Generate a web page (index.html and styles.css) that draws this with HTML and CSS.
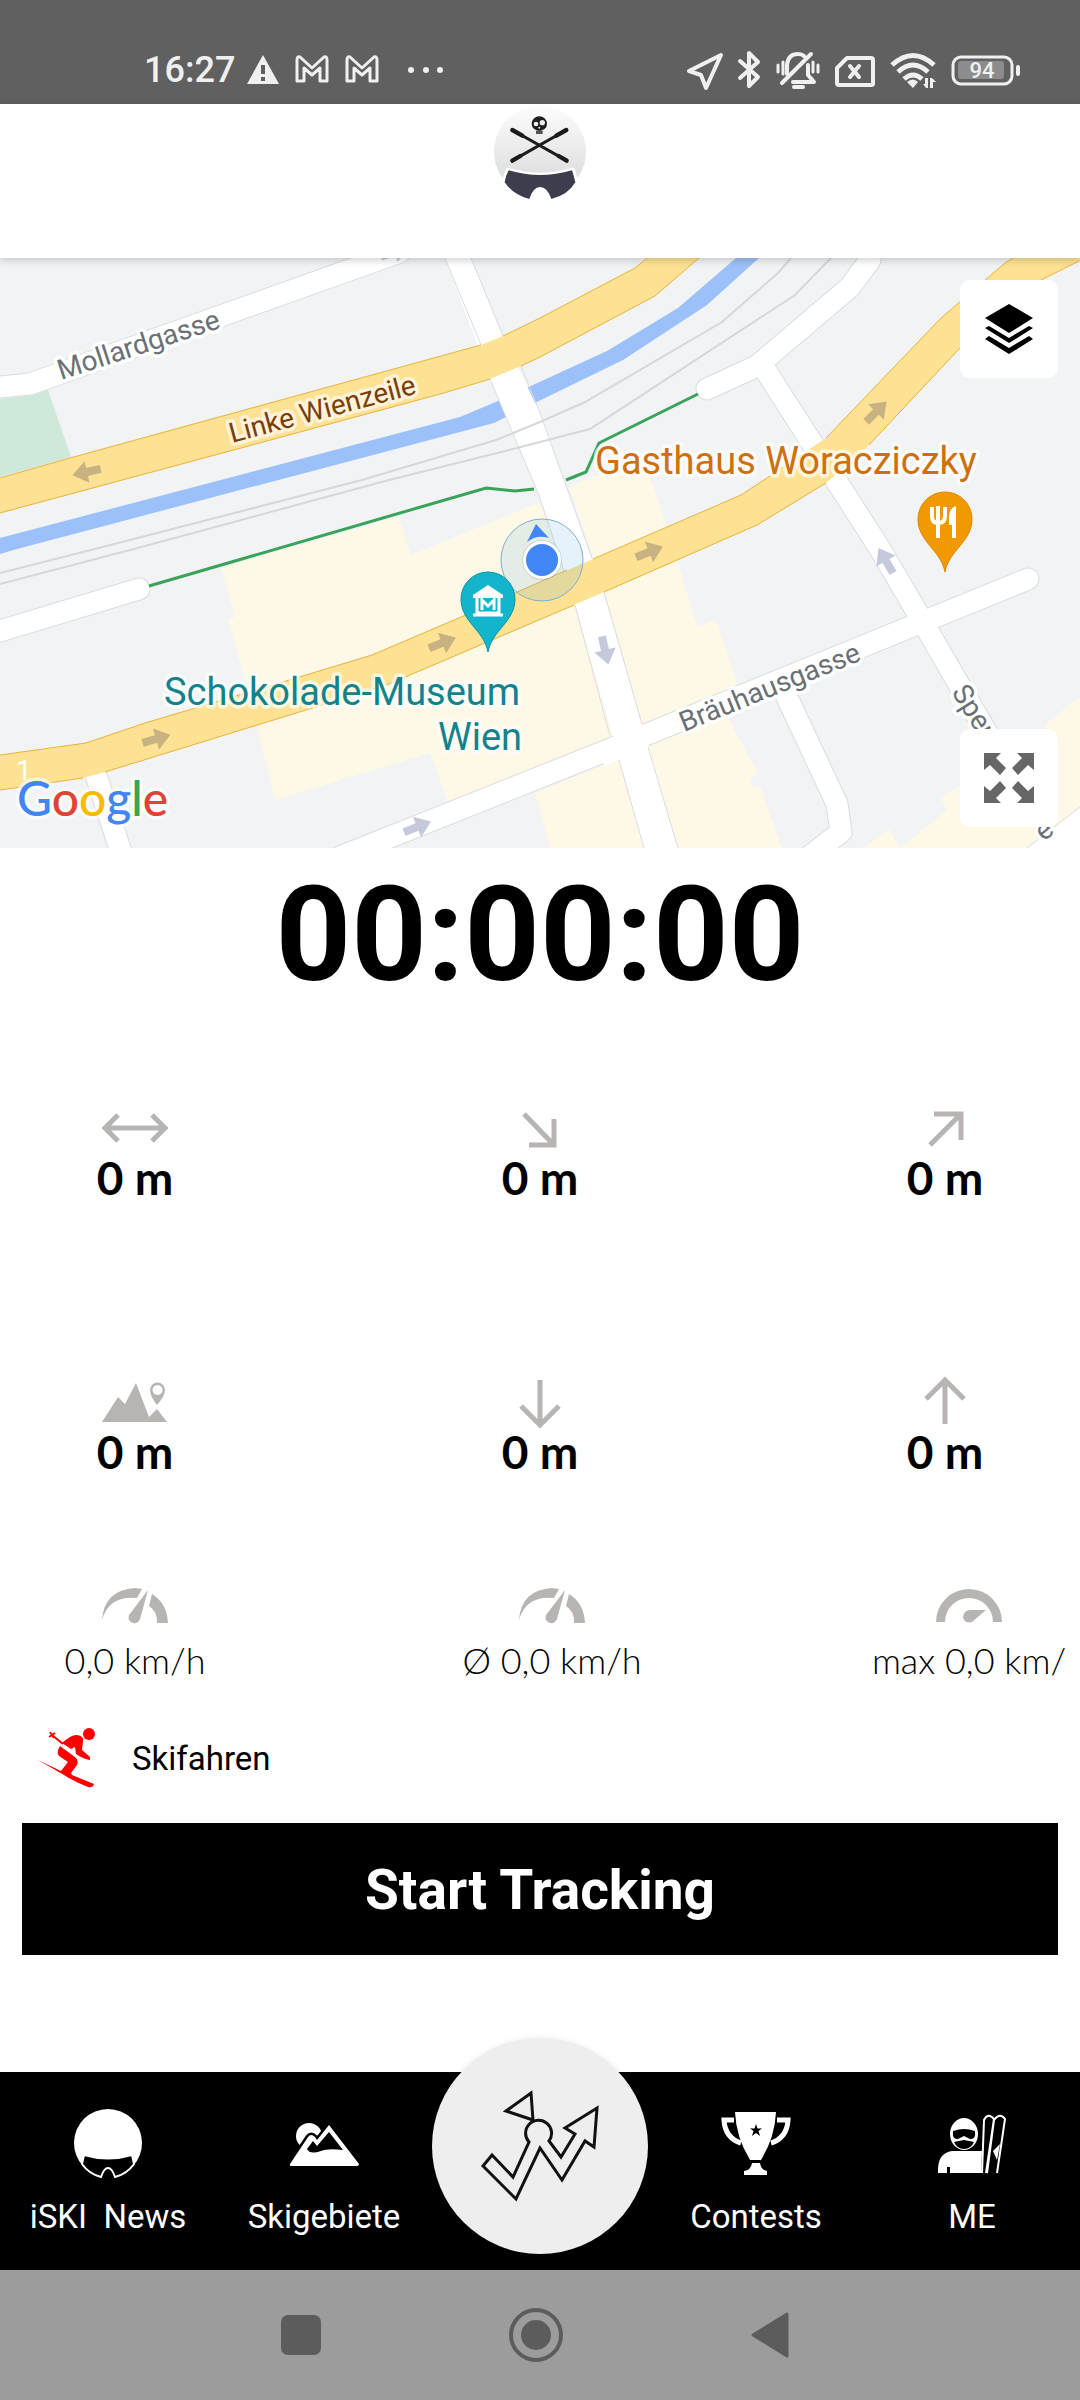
FILE: index.html
```html
<!DOCTYPE html>
<html lang="de">
<head>
  <meta charset="UTF-8">
  <meta name="viewport" content="width=device-width, initial-scale=1">
  <title>iSKI Tracker</title>
  <link rel="stylesheet" href="styles.css">
</head>
<body>

<div class="status-bar">
  <div class="status-group left">
    <span class="clock">16:27</span>
    <svg width="32" height="40" viewBox="0 0 32 40"><path d="M16 5 32 34H0Z" fill="#f0f0f0"/><path d="M14 15h4v9h-4zM14 27h4v4h-4z" fill="#606060"/></svg>
    <svg width="34" height="40" viewBox="0 0 34 40" class="line"><path d="M2 31V10q0-4 3-3L17 18 29 7q3-1 3 3v21h-7V18l-8 7-8-7v13Z"/></svg>
    <svg width="34" height="40" viewBox="0 0 34 40" class="line"><path d="M2 31V10q0-4 3-3L17 18 29 7q3-1 3 3v21h-7V18l-8 7-8-7v13Z"/></svg>
    <svg width="48" height="40" viewBox="0 0 48 40" fill="#f0f0f0"><circle cx="16" cy="20" r="3"/><circle cx="31" cy="20" r="3"/><circle cx="45" cy="20" r="3"/></svg>
  </div>
  <div class="status-group right">
    <svg width="36" height="40" viewBox="0 0 36 40" class="line thick"><path d="M34 5 2 21l12 4 5 13Z"/></svg>
    <svg width="23" height="40" viewBox="0 0 23 40" class="line thick"><path d="M2 11 20 27 11 36V3l9 9L2 28"/></svg>
    <svg width="44" height="40" viewBox="0 0 44 40" class="line thick"><path d="M6 33 35 4M11 24V15Q12 4 22 4q4 0 6 2M32 15v10l6 7H17"/><path d="M2 15v7M7 12v12M37 12v10M42 15v7" stroke-width="3"/><path d="M18 37h9" stroke-width="4"/></svg>
    <svg width="40" height="40" viewBox="0 0 40 40" class="line thick"><path d="M12 8h24q2 0 2 2v24q0 1-2 1H4q-2 0-2-2V18Z"/><path d="m15 16 9 11M24 16l-9 11"/></svg>
    <svg width="46" height="40" viewBox="0 0 46 40"><g fill="none" stroke="#f0f0f0" stroke-width="5"><path d="M2 15Q23-4 44 15"/><path d="M8 22q15-14 30 0"/><path d="M14 29q9-8 18 0"/></g><path d="m17 32q6-5 11 0l-5 6ZM35 28h3v10h-2l-3-4h2zM40 38V28h2l4 4h-3v6z" fill="#f0f0f0"/></svg>
    <svg width="69" height="40" viewBox="0 0 69 40"><rect x="2" y="7" width="59" height="27" rx="8" fill="none" stroke="#f0f0f0" stroke-width="3"/><rect x="7" y="11" width="46" height="18" rx="3" fill="#8c8c8c"/><rect x="65" y="15" width="4" height="11" rx="2" fill="#f0f0f0"/><text x="31" y="28" text-anchor="middle" class="battery-text">94</text></svg>
  </div>
</div>

<header>
  <svg width="100" height="100" viewBox="30 12 300 300">
    <defs>
      <linearGradient id="helmet" x1="0" y1="0" x2="0" y2="1">
        <stop offset="0" stop-color="#fdfdfd"/>
        <stop offset="1" stop-color="#dedede"/>
      </linearGradient>
    </defs>
    <path d="M68 235A138 138 0 1 1 292 235L284 204Q180 236 78 204Z" fill="url(#helmet)"/>
    <g stroke="#1c1c1c" stroke-linecap="round"><path d="M97 90 260 182M259 90 97 182" stroke-width="9"/><path d="m97 90 30 17M259 90l-30 17M97 182l24-14M260 182l-24-14" stroke-width="13"/></g>
    <ellipse cx="178" cy="71" rx="23" ry="22" fill="#1c1c1c"/>
    <path d="M168 92h20v10h-20z" fill="#555"/>
    <circle cx="187" cy="68" r="8" fill="#eee"/><circle cx="168" cy="72" r="7" fill="#eee"/><circle cx="178" cy="83" r="3" fill="#eee"/>
    <path d="M86 211Q180 239 276 211q6 18 10 36-22 38-72 50-12-36-34-36-20 0-32 36-48-12-74-50 2-18 12-36Z" fill="#3c3e4e" stroke="#fff" stroke-width="14" paint-order="stroke"/>
  </svg>
</header>

<section class="map">
  <svg class="map-canvas" viewBox="0 0 1080 590">
    <defs>
      <path id="arrow" d="M-14-4H0v-7L15 0 0 11V4h-14Z"/>
      <path id="pin" d="M0 52C-4 30-27 22-27-1a27 27 0 0 1 54 0C27 22 4 30 0 52Z"/>
      <g id="streets">
        <path d="M-10 130 30 126 400-6"/>
        <path d="M-10 376 139 331"/>
        <path d="M92 505 123 600"/>
        <path d="M340 599 628 484 1028 321"/>
        <path d="M762 107 880 291 924 366 1010 515"/>
        <path d="M707 131 757 108 850 29 870 2"/>
        <path d="M785 435 837 546 841 574 805 602"/>
      </g>
    </defs>
    <rect width="1080" height="590" fill="#f1f3f5"/>

    <!-- blocks -->
    <path d="M0 141 33 137 48 132 71 199 0 219Z" fill="#cee9d9"/>
    <g fill="#fef8e7">
      <path d="M221 310 272 295 399 259 411 297 540 244 575 347 613 479 448 544 430 495 275 542 253 452 228 361 235 359Z"/>
      <path d="M569 228 605 214 645 203 666 267 678 305 697 368 716 362 737 425 729 462 758 515 749 522 752 529 760 528 782 590H678L604 334Z"/>
      <path d="M535 535 619 500 644 590H550Z"/>
      <path d="M864 590 889 571 900 590 947 552 940 539 960 528 1058 480 1044 467 1080 439V590Z"/>
    </g>
    <path d="M0 280 460 159 498 143 607 93 678 50 736 0H759L707 47 623 102 504 160 494 165 17 291 0 296Z" fill="#9cc0f9"/>

    <!-- streets -->
    <g fill="none" stroke-linecap="round" stroke-linejoin="round">
      <use href="#streets" stroke="#dadce0" stroke-width="23"/>
      <use href="#streets" stroke="#fff" stroke-width="21"/>
    </g>
    <path d="M445 0 490 121 540 240 575 347 613 479 644 590H678L604 334 540 155 503 78 471 0Z" fill="#fff"/>
    <path d="M1027 590 1080 549V590Z" fill="#fff"/>
    <g fill="none" stroke="#dadce0" stroke-width="1">
      <path d="M445 0 481 87M471 0 503 78M490 121 540 240 572 338M521 108 540 155 592 300M575 347 610 478M604 334 642 466M619 502 644 590M648 489 678 590M1027 590 1080 549"/>
    </g>
    <path d="M600 500 628 484 660 471" stroke="#fff" stroke-width="20"/>
    <g fill="none" stroke="#d5d7dc" stroke-width="2">
      <path d="M0 315 91 292 362 222 496 182 540 164 585 144 722 64 778 15 791 0"/>
      <path d="M0 326 134 291 389 222 517 190 590 171 795 37 831 0"/>
    </g>
    <g fill="none" stroke="#3aa35a" stroke-width="3">
      <path d="M149 328 486 230 515 233 534 231M566 222 586 214 599 185 698 136"/>
    </g>

    <!-- main roads -->
    <g fill="#fde293">
      <path d="M0 220 70 200 481 87 503 78 540 60 635 10 647 0H699L655 38 540 99 521 108 490 121 444 135 241 190 0 255Z"/>
      <path d="M0 497 86 485 145 465 296 420 372 397 461 359 593 301 741 237 826 180 941 60 1005 5 1013 0H1085L1041 22 960 90 869 187 850 205 826 225 757 267 604 334 574 347 389 426 306 452 105 514 83 520 0 532Z"/>
    </g>
    <g fill="none" stroke="#e9b23c" stroke-width="1">
      <path d="M0 220 70 200 481 87M503 78 540 60 635 10 647 0M699 0 655 38 540 99 521 108M490 121 444 135 241 190 0 255"/>
      <path d="M0 497 86 485 145 465 296 420 372 397 461 359 567 312M593 301 741 237 802 197M826 180 941 60 1005 5 1013 0M1085 0 1041 22 960 90 869 187M826 225 757 267 604 334M574 347 389 426 306 452 105 514M83 520 0 532"/>
    </g>

    <g fill="#c8b282">
      <use href="#arrow" transform="translate(87 214) rotate(167)"/>
      <use href="#arrow" transform="translate(876 154) rotate(-45)"/>
      <use href="#arrow" transform="translate(649 294) rotate(-22)"/>
      <use href="#arrow" transform="translate(156 481) rotate(-16)"/>
      <use href="#arrow" transform="translate(442 385) rotate(-22)"/>
    </g>
    <g fill="#c6c8dc">
      <use href="#arrow" transform="translate(417 569) rotate(-22)"/>
      <use href="#arrow" transform="translate(605 392) rotate(77)"/>
      <use href="#arrow" transform="translate(886 303) rotate(240)"/>
      <use href="#arrow" transform="translate(394 -6) rotate(-20)"/>
    </g>

    <!-- position -->
    <circle cx="542" cy="302" r="41" fill="#4aa3e0" fill-opacity="0.14" stroke="#7fb0cf" stroke-width="1"/>
    <path d="M536 266 549 280Q537 276 527 284Z" fill="#4285f4"/>
    <circle cx="542" cy="302" r="20" fill="#000" fill-opacity="0.1"/>
    <circle cx="542" cy="302" r="19" fill="#fff"/>
    <circle cx="542" cy="302" r="16" fill="#4285f4"/>

    <!-- places -->
    <g transform="translate(488 342)">
      <use href="#pin" fill="#12b5cb" stroke="#1092a5"/>
      <path d="M0-15 15-5v3h-30v-3Z" fill="#fff"/>
      <path d="M-11-2V13H11V-2M-15 15H15" fill="none" stroke="#fff" stroke-width="3"/>
      <path d="M-6 10V0L0 6 6 0V10" fill="none" stroke="#fff" stroke-width="3"/>
    </g>
    <g transform="translate(945 262)">
      <use href="#pin" fill="#f29900" stroke="#dd8600"/>
      <path d="M-13-13V-4Q-13 3-7 3 0 3 0-4V-13M-7-14V18" fill="none" stroke="#fff" stroke-width="4"/>
      <path d="M11-14Q4-12 4-2V5H7V18H11Z" fill="#fff"/>
    </g>

    <g class="label street">
      <text transform="translate(61 122) rotate(-18)">Mollardgasse</text>
      <text transform="translate(684 474) rotate(-22)">Bräuhausgasse</text>
      <text transform="translate(951 434) rotate(58)">Sper</text>
      <text transform="translate(1044 584) rotate(-40)">e</text>
    </g>
    <text class="label avenue" transform="translate(232 185) rotate(-15)">Linke Wienzeile</text>
    <text class="label food" x="595" y="216">Gasthaus Woracziczky</text>
    <text class="label museum" x="164" y="447">Schokolade-Museum</text>
    <text class="label museum" x="438" y="492">Wien</text>
    <text class="label page" x="16" y="522">1</text>
    <text class="label google" x="17" y="558"><tspan fill="#4285f4">G</tspan><tspan fill="#e04335">o</tspan><tspan fill="#f8bb05">o</tspan><tspan fill="#4285f4">g</tspan><tspan fill="#34a853">l</tspan><tspan fill="#e04335">e</tspan></text>
  </svg>
  <button class="map-btn layers" aria-label="Layers">
    <svg width="50" height="50" viewBox="0 0 50 50"><path d="M25 0 49 14 25 29 1 14ZM5 22 25 34 45 22 49 24 25 39 1 24ZM5 32 25 44 45 32 49 35 25 50 1 35Z"/></svg>
  </button>
  <button class="map-btn expand" aria-label="Fullscreen">
    <svg width="50" height="50" viewBox="0 0 50 50" fill="#666"><path id="corner" d="M0 0H17L12 5 22 15 16 22 6 12 0 17Z"/><use href="#corner" transform="matrix(-1 0 0 1 50 0)"/><use href="#corner" transform="matrix(1 0 0 -1 0 50)"/><use href="#corner" transform="matrix(-1 0 0 -1 50 50)"/></svg>
  </button>
</section>

<main>
  <div class="timer">00:00:00</div>

  <div class="stats">
    <div class="stat">
      <svg width="66" height="48" viewBox="0 0 66 48"><path d="M16 11 3 24 16 37M50 11 63 24 50 37M3 24H63"/></svg>
      <span>0 m</span>
    </div>
    <div class="stat">
      <svg width="66" height="48" viewBox="0 0 66 48"><path d="M22 41H47V15M17 10 46 40"/></svg>
      <span>0 m</span>
    </div>
    <div class="stat">
      <svg width="66" height="48" viewBox="0 0 66 48"><path d="M22 10H49V36M18 41 48 11"/></svg>
      <span>0 m</span>
    </div>
    <div class="stat">
      <svg width="66" height="48" viewBox="0 0 66 48" class="solid"><path d="M0 44 16 19 23 26 34 5 47 39 55 31 65 44Z"/><path fill-rule="evenodd" d="M55 27Q48 18 48 12a7 7 0 0 1 15 0Q63 18 55 27ZM55.500 7a5 5 0 1 0 .1 0Z"/></svg>
      <span>0 m</span>
    </div>
    <div class="stat">
      <svg width="66" height="48" viewBox="0 0 66 48"><path d="M33 2V46M14 28 33 47 52 28"/></svg>
      <span>0 m</span>
    </div>
    <div class="stat">
      <svg width="66" height="48" viewBox="0 0 66 48"><path d="M33 46V2M14 21 33 2 52 21"/></svg>
      <span>0 m</span>
    </div>
  </div>

  <div class="speeds">
    <div class="speed">
      <svg width="66" height="36" viewBox="0 0 66 36"><path d="M0 32Q2 2 33 0L40 1 35 10Q7 7 0 32ZM46 2 38 31Q36 36 31 35 25 33 27 27ZM50 6Q65 15 66 35H55Q56 24 47 18Z"/></svg>
      <span>0,0 km/h</span>
    </div>
    <div class="speed">
      <svg width="66" height="36" viewBox="0 0 66 36"><path d="M0 32Q2 2 33 0L40 1 35 10Q7 7 0 32ZM46 2 38 31Q36 36 31 35 25 33 27 27ZM50 6Q65 15 66 35H55Q56 24 47 18Z"/></svg>
      <span>Ø 0,0 km/h</span>
    </div>
    <div class="speed">
      <svg width="66" height="36" viewBox="0 0 66 36"><path d="M0 34A33 33 0 0 1 66 34H57A24 24 0 0 0 9 34ZM50 22 36 34Q28 36 27 29 28 22 34 22Z"/></svg>
      <span>max 0,0 km/</span>
    </div>
  </div>

  <div class="activity">
    <svg width="60" height="60" viewBox="0 0 60 60" fill="#f00"><circle cx="53" cy="6" r="6"/><path d="M26 15Q36 6 41 7 48 8 47 13L46 22 54 29V32Q47 31 40 26L39 19 35 21Z"/><path d="M24 18 39 29Q43 32 41 37L35 45 36 47 58 56Q57 60 52 59 37 53 28 47L2 32 25 43 32 34 23 28Q20 24 24 18Z"/><path d="M16 7 27 16M13 9 19 5M14 4l4 6" stroke="#f00" stroke-width="2"/></svg>
    <span>Skifahren</span>
  </div>

  <button class="start-btn">Start Tracking</button>
</main>

<nav class="tabs">
  <a href="#news">
    <svg width="72" height="72" viewBox="0 0 72 72"><path d="M11 59A34 34 0 1 1 61 59Z" fill="#fff"/><path d="M12 48Q36 55 60 48L62 57Q55 67 43 70 40 61 36 61 32 61 29 70 17 67 10 57Z" fill="#000" stroke="#fff" stroke-width="2"/></svg>
    iSKI&nbsp; News
  </a>
  <a href="#resorts">
    <svg width="72" height="72" viewBox="0 0 72 72"><circle cx="21" cy="29" r="13" fill="#fff"/><path d="M2 57 20 30Q23 26 27 30L29 33 41 18 71 57Q71 59 69 59H4Q1 59 2 57Z" fill="#fff" stroke="#000" stroke-width="5" paint-order="stroke"/><path d="M19 42 25 34 29 39 41 25 55 43Q40 41 33 44 22 48 19 42Z"/></svg>
    Skigebiete
  </a>
  <a href="#track" class="fab" aria-label="Tracking">
    <svg viewBox="0 0 216 216" fill="none" stroke="#111" stroke-width="3"><path d="M51 128 60 117 81 139 97 104A13 13 0 1 1 117 103L129 119 143 96 133 90 165 70 162 109 153 103 130 142 108 110 84 161Z"/><path d="M74 73 99 55 101 82Z"/></svg>
  </a>
  <a href="#contests">
    <svg width="72" height="72" viewBox="0 0 72 72" fill="#fff"><path d="M15 5H56Q55 30 41 53H30Q16 30 15 5Z"/><path d="M32 56H40Q41 63 47 64V68H24V64Q31 63 32 56Z"/><path d="M14 13H4Q5 31 21 36M57 13H68Q67 31 51 36" fill="none" stroke="#fff" stroke-width="5"/><path d="m36 17 1.500 4.500H42L38.500 24 40 29 36 26 32 29 33.500 24 30 21.500H34.500Z" fill="#000"/></svg>
    Contests
  </a>
  <a href="#me">
    <svg width="72" height="72" viewBox="0 0 72 72"><ellipse cx="28" cy="27" rx="14" ry="16" fill="#fff"/><path d="M17 24Q28 20 39 24 40 33 34 32L28 29 22 32Q16 33 17 24ZM18 35 28 33 38 35Q35 42 28 42 21 42 18 35Z"/><path d="M2 66Q1 46 16 44H46L45 66H14V60H11V66Z" fill="#fff"/><path d="M46 66 48 13Q52 5 58 12L50 66M51 66 58 13Q64 5 69 12L61 66" fill="none" stroke="#fff" stroke-width="2"/><path d="M64 37 57 44 61 53Z" fill="#fff"/></svg>
    ME
  </a>
</nav>

<div class="system-nav">
  <button aria-label="Recent apps"><svg width="56" height="56" viewBox="0 0 56 56"><rect x="8" y="8" width="40" height="40" rx="7" fill="#5c5c5c"/></svg></button>
  <button aria-label="Home"><svg width="56" height="56" viewBox="0 0 56 56"><circle cx="28" cy="28" r="25" fill="none" stroke="#5c5c5c" stroke-width="4"/><circle cx="28" cy="28" r="15" fill="#5c5c5c"/></svg></button>
  <button aria-label="Back"><svg width="56" height="56" viewBox="0 0 56 56"><path d="M10 28 44 7V49Z" fill="#5c5c5c" stroke="#5c5c5c" stroke-width="3" stroke-linejoin="round"/></svg></button>
</div>

</body>
</html>
```
FILE: styles.css
```css
* {
  box-sizing: border-box;
}

body {
  margin: 0;
  font-family: Roboto, "Open Sans", sans-serif;
  background-color: #fff;
  color: #000;
  display: flex;
  flex-direction: column;
  min-height: 100vh;
}

svg {
  display: block;
  overflow: visible;
}

button {
  border: none;
  padding: 0;
  font-family: inherit;
  cursor: pointer;
}

/* status bar */
.status-bar {
  background: #606060;
  color: #f0f0f0;
  padding: 50px 60px 14px 144px;
  display: flex;
  justify-content: space-between;
}

.status-group {
  display: flex;
  align-items: center;
  gap: 15px;
}

.status-group.left {
  gap: 16px;
}

.clock {
  font-size: 36px;
  line-height: 40px;
  font-weight: 500;
  margin-right: -4px;
}

.line {
  fill: none;
  stroke: #f0f0f0;
  stroke-width: 3;
  stroke-linejoin: round;
}

.line.thick {
  stroke-width: 4;
  stroke-linecap: round;
}

.battery-text {
  fill: #f0f0f0;
  font-size: 22px;
  font-weight: 500;
}

header {
  position: relative;
  z-index: 1;
  display: flex;
  justify-content: center;
  padding-bottom: 54px;
  background: #fff;
  box-shadow: 0 2px 8px rgba(0, 0, 0, 0.2);
}

/* map */
.map {
  position: relative;
}

.map-canvas {
  width: 100%;
  height: auto;
  overflow: hidden;
}

.label {
  stroke: #fff;
  stroke-width: 7px;
  stroke-linejoin: round;
  paint-order: stroke;
}

.street {
  font-size: 28px;
  fill: #6b7075;
}

.avenue {
  font-size: 28px;
  fill: #7a3e0c;
  stroke: #fef3d8;
}

.food,
.museum {
  font-size: 38px;
  stroke-opacity: 0.7;
}

.food {
  fill: #cf700e;
}

.museum {
  fill: #12838c;
}

.page {
  font-size: 28px;
  fill: #fff;
  stroke: none;
}

.google {
  font-family: Lato, sans-serif;
  font-size: 48px;
  font-weight: 500;
  stroke-opacity: 0.6;
}

.map-btn {
  position: absolute;
  right: 22px;
  width: 98px;
  height: 98px;
  display: flex;
  align-items: center;
  justify-content: center;
  background: #fff;
  border-radius: 10px;
}

.layers {
  top: 22px;
}

.expand {
  bottom: 21px;
}

/* tracking values */
main {
  flex: 1;
}

.timer {
  font-size: 132px;
  line-height: 174px;
  font-weight: 700;
  text-align: center;
}

.stats {
  display: grid;
  grid-template-columns: repeat(3, 25%);
  justify-content: space-between;
  row-gap: 174px;
  margin-top: 82px;
}

.stat,
.speed {
  display: flex;
  flex-direction: column;
  align-items: center;
  font-family: Lato, sans-serif;
}

.stat {
  font-size: 46px;
  line-height: 52px;
  font-weight: 700;
}

.stat svg {
  fill: none;
  stroke: #b8b4b4;
  stroke-width: 5;
}

.stat svg.solid {
  fill: #b8b4b4;
  stroke: none;
}

.speeds {
  display: flex;
  justify-content: space-between;
  margin-top: 110px;
  padding: 0 16px 0 40px;
}

.speed {
  width: 190px;
  gap: 14px;
  font-size: 36px;
  font-weight: 300;
  line-height: 44px;
  white-space: nowrap;
}

.speed svg {
  fill: #b8b4b4;
}

.activity {
  display: flex;
  align-items: center;
  gap: 36px;
  margin-top: 46px;
  padding-left: 36px;
  font-size: 33px;
}

.start-btn {
  display: block;
  width: calc(100% - 44px);
  margin: 35px 22px;
  padding: 35px 0 33px;
  background: #000;
  color: #fff;
  font-size: 55px;
  line-height: 64px;
  font-weight: 700;
}

/* bottom tabs */
.tabs {
  display: grid;
  grid-template-columns: repeat(5, 1fr);
  background: #000;
}

.tabs a {
  display: flex;
  flex-direction: column;
  align-items: center;
  gap: 18px;
  padding: 35px 0 33px;
  color: #fff;
  font-size: 33px;
  line-height: 40px;
  text-decoration: none;
  white-space: nowrap;
}

.tabs .fab {
  justify-self: center;
  align-self: start;
  width: 216px;
  height: 216px;
  margin: -34px 0 -18px;
  padding: 0;
  border-radius: 50%;
  background: #eee;
  box-shadow: 0 0 6px rgba(0, 0, 0, 0.08);
}

.fab svg {
  width: 216px;
  height: 216px;
}

.system-nav {
  display: flex;
  justify-content: center;
  gap: 179px;
  padding: 37px 8px 37px 0;
  background: #9c9c9c;
}

.system-nav button {
  background: none;
}
```
